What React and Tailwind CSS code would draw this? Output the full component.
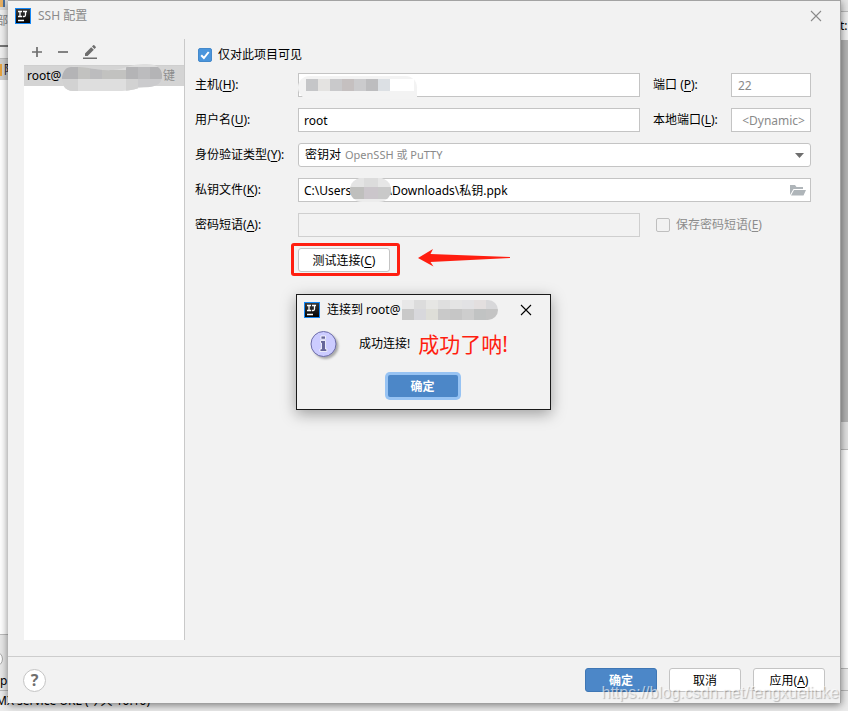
import { useState } from "react";

const Logo = () => (
  <svg viewBox="0 0 16 16" className="w-4 h-4 shrink-0" aria-hidden="true">
    <defs>
      <linearGradient id="logoFill" x1="0" y1="0" x2="0" y2="1">
        <stop offset="0" stopColor="#3c3c3c" />
        <stop offset="1" stopColor="#000" />
      </linearGradient>
    </defs>
    <rect x="0.5" y="0.5" width="15" height="15" fill="url(#logoFill)" stroke="#1487f5" />
    <path
      d="M3 3.500h4M3 8.500h4M5 3.500v5M8 3.500h4M10.500 3.500v3.500c0 1-.5 1.500-1.300 1.500H7.800M3 12.500h6"
      fill="none"
      stroke="#fff"
      strokeWidth="1.3"
    />
  </svg>
);

const CloseIcon = () => (
  <svg viewBox="0 0 12 12" className="w-3 h-3" aria-hidden="true">
    <path d="M1 1l10 10M11 1L1 11" fill="none" stroke="currentColor" strokeWidth="1.1" />
  </svg>
);

// Label text with an underlined mnemonic letter, e.g. 主机(H):
const Mnemonic = ({ text, letter, end = "" }) => (
  <>
    {text}(<span className="underline underline-offset-2">{letter}</span>){end}
  </>
);

// Blurred-out block over private text
const Mosaic = ({ cells, size = "w-3 h-3" }) => (
  <span className="flex">
    {cells.map((color, i) => (
      <span key={i} className={`${size} shrink-0`} style={{ backgroundColor: color }} />
    ))}
  </span>
);

const inputClass =
  "block w-full h-6 px-[5px] border border-[#c4c4c4] bg-white text-black focus:outline-none";
const buttonClass =
  "h-6 pt-[2px] border border-[#c4c4c4] rounded-[3px] bg-white text-black leading-5 whitespace-nowrap";

// Main window that stays visible around the dialog
const Backdrop = () => (
  <div className="absolute inset-0 flex flex-col overflow-hidden bg-[#ececec]" aria-hidden="true">
    <div className="flex justify-between flex-1">
      <div className="w-2 flex flex-col overflow-hidden bg-white">
        <div className="h-[10px] bg-[#ddd] flex">
          <span className="w-[3px] h-[7px] bg-[#e8b062]" />
          <span className="w-[2px] h-[7px] bg-[#4a6f9c]" />
        </div>
        <div className="h-[35px] pt-[3px] bg-[#f0f0f0] text-[#888] overflow-hidden">
          <span className="block -ml-1">部</span>
        </div>
        <div className="h-[13px] border-t-2 border-[#777] bg-[#f0f0f0]" />
        <div className="h-[22px] flex items-center bg-[#d0d0d0] border-t border-[#bbb]">
          <span className="w-[2px] h-3 shrink-0 bg-[#e8a33d]" />
          <span className="ml-[2px] shrink-0">阿</span>
        </div>
        <div className="flex-1" />
        <div className="h-[56px] border-t border-[#bbb] bg-[#e8e8e8] flex flex-col">
          <span className="w-4 h-4 mt-4 -ml-[13px] shrink-0 rounded-full border border-[#aaa] bg-white" />
          <span className="mt-[6px] leading-4">p</span>
        </div>
      </div>
      <div className="w-2 flex flex-col bg-white">
        <div className="h-3 border-b border-[#bbb] bg-[#e6e6e6]" />
        <div className="h-7 pt-[6px] bg-[#f0f0f0] whitespace-nowrap">t:</div>
        <div className="h-[382px] bg-[#b4b4b4]" />
        <div className="h-[28px] border-b border-[#bbb] bg-[#e2e2e2]" />
        <div className="flex-1" />
        <div className="h-[22px] border-t border-[#bbb] bg-[#ececec]" />
      </div>
    </div>
    <div className="h-[21px] border-t border-[#bbb] pt-[1px] leading-[18px] whitespace-nowrap">
      <span className="-ml-1">MX service URL (今天 10:10)</span>
    </div>
  </div>
);

const Sidebar = () => (
  <aside className="w-[161px] shrink-0 flex flex-col border-r border-[#c9c9c9]">
    <div className="h-[27px] pl-[7px] pb-[1px] flex items-center gap-[14px] border-b border-[#cfcfcf] text-[#6e6e6e]">
      <button type="button" aria-label="添加">
        <svg viewBox="0 0 12 12" className="w-3 h-3">
          <path d="M6 1v10M1 6h10" stroke="currentColor" strokeWidth="1.7" />
        </svg>
      </button>
      <button type="button" aria-label="删除">
        <svg viewBox="0 0 12 12" className="w-3 h-3">
          <path d="M1 6h10" stroke="currentColor" strokeWidth="1.7" />
        </svg>
      </button>
      <button type="button" aria-label="编辑">
        <svg viewBox="0 0 14 14" className="w-[14px] h-[14px]" fill="currentColor">
          <path d="M2 11V8.4L8.2 2.2l2.6 2.6L4.6 11zM9 1.5L10.2.3a.8.8 0 0 1 1.1 0l1.4 1.4c.3.3.3.8 0 1.1L11.5 4zM0 12.5h14V14H0z" />
        </svg>
      </button>
    </div>
    <ul className="flex-1 bg-white">
      <li className="relative h-5 pl-[3px] pr-[9px] flex items-center justify-between bg-[#d4d4d4]">
        <span>root@</span>
        <span className="text-[#8c8c8c]">键</span>
        <svg viewBox="0 0 102 28" className="absolute left-[37px] -top-[2px] w-[102px] h-[28px]" aria-hidden="true">
          <defs>
            <clipPath id="smear">
              <path d="M10 3C25 2 35 7 52 6C65 5 68 0 85 0C98 0 102 6 101 14C100 22 92 23 78 24C68 28 55 27 40 27H12C4 27 0 20 1 13C2 7 5 3 10 3z" />
            </clipPath>
          </defs>
          <g clipPath="url(#smear)">
            <rect width="102" height="28" fill="#dedede" />
            <path d="M0 3h17v12H0zM65 3h12v12H65zM89 3h12v12H89z" fill="#b4b4b6" />
            <path d="M17 3h12v12H17zM41 6h24v9H41z" fill="#c2c2c0" />
            <path d="M29 4h12v11H29zM77 3h12v12H77z" fill="#bcbcbe" />
            <path d="M0 15h17v12H0zM65 15h12v12H65z" fill="#d2d2d2" />
            <path d="M77 15h24v8H77z" fill="#cbcbcd" />
          </g>
        </svg>
      </li>
    </ul>
  </aside>
);

const ResultDialog = () => (
  <div
    role="dialog"
    aria-label="连接结果"
    className="absolute left-[288px] top-[293px] w-[255px] h-[116px] border border-[#1a1a1a] bg-[#f2f2f2] shadow-[0_4px_14px_rgba(0,0,0,0.35)]"
  >
    <div className="h-[29px] pl-[7px] pr-[18px] flex items-center">
      <Logo />
      <span className="ml-[7px]">连接到 root@</span>
      <span className="ml-[2px] rounded-tl-lg rounded-r-full overflow-hidden">
        <Mosaic size="w-[12px] h-[9px]" cells={["#e8e8e8", "#dcdcdc", "#e6e6e4", "#dfdfdf", "#e4e4e4", "#e2e2e4", "#e3dfdf", "#d8d8da"]} />
        <Mosaic size="w-[12px] h-[11px]" cells={["#c9c9c9", "#d8d8dc", "#deded8", "#c9c9c9", "#c6c6c6", "#cdcdcd", "#c1c3c3", "#c4c4c4"]} />
      </span>
      <button type="button" aria-label="关闭" className="ml-auto">
        <CloseIcon />
      </button>
    </div>
    <div className="h-[40px] pl-[12px] flex items-center">
      <svg viewBox="0 0 30 30" className="w-[30px] h-[30px] shrink-0 drop-shadow-[2px_2px_1px_rgba(0,0,0,0.3)]" aria-hidden="true">
        <circle cx="14.500" cy="15" r="12.500" fill="#ccccff" stroke="#6b6ba8" />
        <path
          d="M12 7h4.500v3.200H12zM11.500 11.500h5v8.500h1.300v2.500h-6.800V20h1.500v-6h-1z"
          fill="#666699"
          stroke="#fff"
          strokeWidth="0.8"
        />
      </svg>
      <span className="ml-[20px]">成功连接!</span>
      <span className="ml-[8px] text-[21px] text-[#ff1e10]">成功了呐!</span>
    </div>
    <div className="pt-[11px] pr-[2px] flex justify-center">
      <button
        type="button"
        className="w-[70px] h-[22px] pt-[2px] leading-5 rounded-[2px] bg-[#4c87c8] text-white font-bold ring-3 ring-[#97c3f3]"
      >
        确定
      </button>
    </div>
  </div>
);

const App = () => {
  const [projectOnly, setProjectOnly] = useState(true);
  const [user, setUser] = useState("root");

  return (
    <div className="relative min-h-screen flex flex-col text-xs text-black font-['Noto_Sans','Noto_Sans_CJK_SC',sans-serif]">
      <Backdrop />
      <main className="relative flex-1 flex flex-col ml-2 mr-[7px] mb-2 border-t border-r border-[#a3a3a3] bg-[#f2f2f2] shadow-[0_2px_8px_rgba(0,0,0,0.5)]">
        <header className="h-[29px] pl-[7px] pr-[18px] flex items-center text-[#8a8a8a]">
          <Logo />
          <h1 className="ml-[7px]">SSH 配置</h1>
          <button type="button" aria-label="关闭" className="ml-auto">
            <CloseIcon />
          </button>
        </header>

        <div className="flex-1 flex pl-4 pr-[29px] pt-[9px] pb-4">
          <Sidebar />
          <form className="flex-1 pl-[10px] pt-[8px]" onSubmit={(e) => e.preventDefault()}>
            <label className="h-4 mb-[10px] pl-[3px] flex items-center gap-[6px] w-fit">
              <span className="relative w-[14px] h-[14px]">
                <input
                  type="checkbox"
                  checked={projectOnly}
                  onChange={(e) => setProjectOnly(e.target.checked)}
                  className="peer block appearance-none w-[14px] h-[14px] rounded-[2px] border border-[#b0b0b0] bg-white checked:bg-[#4a95dc] checked:border-[#4589cb]"
                />
                <svg viewBox="0 0 14 14" className="absolute inset-0 pointer-events-none opacity-0 peer-checked:opacity-100">
                  <path d="M3.2 7.2l2.7 2.8 4.8-6" fill="none" stroke="#fff" strokeWidth="2" />
                </svg>
              </span>
              仅对此项目可见
            </label>

            <div className="grid grid-cols-[103px_1fr_91px_80px] gap-y-[11px] items-center">
              <label htmlFor="host">
                <Mnemonic text="主机" letter="H" end=":" />
              </label>
              <div className="relative">
                <input id="host" className={inputClass} />
                <span className="absolute left-0 top-[3px] h-[23px] w-[119px] rounded-l-full rounded-tr-full bg-[#f3f3f3] pl-[8px] pt-[3px]">
                  <Mosaic cells={["#c5c6c8", "#e4e3e1", "#c9c9cb", "#c5c0c0", "#cbcbcd", "#bdbdbf", "#dce0e4", "#fff", "#fff"]} />
                </span>
              </div>
              <label htmlFor="port" className="pl-[13px]">
                <Mnemonic text="端口 " letter="P" end=":" />
              </label>
              <input id="port" placeholder="22" className={`${inputClass} pl-[6px] placeholder:text-[#8a8a8a]`} />

              <label htmlFor="user">
                <Mnemonic text="用户名" letter="U" end=":" />
              </label>
              <input id="user" value={user} onChange={(e) => setUser(e.target.value)} className={inputClass} />
              <label htmlFor="localPort" className="pl-[13px]">
                <Mnemonic text="本地端口" letter="L" end=":" />
              </label>
              <input
                id="localPort"
                placeholder="<Dynamic>"
                className={`${inputClass} text-right placeholder:text-[#8a8a8a]`}
              />

              <label htmlFor="authType">
                <Mnemonic text="身份验证类型" letter="Y" end=":" />
              </label>
              <div className="relative col-span-3">
                <select id="authType" className={`${inputClass} appearance-none rounded-[3px] text-transparent`}>
                  <option>密钥对 OpenSSH 或 PuTTY</option>
                </select>
                <span className="absolute inset-y-0 left-[7px] flex items-center gap-1 pointer-events-none">
                  密钥对 <span className="text-[11px] text-[#8a8a8a]">OpenSSH 或 PuTTY</span>
                </span>
                <svg viewBox="0 0 9 5" className="absolute right-[7px] top-[10px] w-[9px] h-[5px] pointer-events-none">
                  <path d="M0 0h9L4.500 5z" fill="#6e6e6e" />
                </svg>
              </div>

              <label htmlFor="keyFile">
                <Mnemonic text="私钥文件" letter="K" end=":" />
              </label>
              <div className="relative col-span-3">
                <input id="keyFile" defaultValue="C:\Users\xxxxx\Downloads\私钥.ppk" className={inputClass} />
                <span className="absolute left-[52px] top-0 w-[41px] h-6 rounded-full overflow-hidden bg-[#ececec]">
                  <Mosaic size="w-[14px] h-[9px]" cells={["#e4e4e4", "#dcdcdc", "#e6e6e6"]} />
                  <Mosaic size="w-[14px] h-[12px]" cells={["#bfbfbd", "#cbc6cb", "#c9c9c9"]} />
                </span>
                <button type="button" aria-label="浏览" className="absolute right-[5px] top-[6px]">
                  <svg viewBox="0 0 16 12" className="w-4 h-3" fill="#afb5b9">
                    <path d="M0 11V1h5l1.500 2H13v2H3.500zM4 6h12l-2.500 5.500H1z" />
                  </svg>
                </button>
              </div>

              <label htmlFor="passphrase">
                <Mnemonic text="密码短语" letter="A" end=":" />
              </label>
              <input
                id="passphrase"
                type="password"
                disabled
                className="block w-full h-6 px-[5px] border border-[#cfcfcf] bg-[#f2f2f2]"
              />
              <label className="col-span-2 pl-4 flex items-center gap-[6px] text-[#8c8c8c]">
                <input
                  type="checkbox"
                  disabled
                  className="appearance-none w-[14px] h-[14px] rounded-[2px] border border-[#bfbfbf] bg-[#f2f2f2]"
                />
                <span>
                  <Mnemonic text="保存密码短语" letter="E" />
                </span>
              </label>

              <div className="col-start-2 relative w-fit">
                <button type="button" className={`${buttonClass} block w-[92px]`}>
                  <Mnemonic text="测试连接" letter="C" />
                </button>
                <span className="absolute -left-[7px] -right-[10px] -top-[5px] -bottom-[4px] border-3 border-[#ff1e10] rounded-[3px] pointer-events-none" />
                <svg viewBox="0 0 92 18" className="absolute left-[120px] top-[1px] w-[92px] h-[18px]" aria-hidden="true">
                  <path d="M0 9L15 0l-2.500 5L92 8v1L12.500 13l3 4.500z" fill="#ff1e10" />
                </svg>
              </div>
            </div>
          </form>
        </div>

        <footer className="h-[47px] pl-[15px] pr-[15px] flex items-center gap-3 border-t border-[#cdcdcd]">
          <button
            type="button"
            aria-label="帮助"
            className="w-[23px] h-[23px] mr-auto rounded-full border border-[#c4c4c4] bg-white text-base leading-none font-bold text-[#6e6e6e]"
          >
            ?
          </button>
          <button
            type="button"
            className="w-[72px] h-6 pt-[2px] leading-5 rounded-[3px] border border-[#3f77b5] bg-[#4c87c8] text-white font-bold"
          >
            确定
          </button>
          <button type="button" className={`${buttonClass} w-[72px]`}>
            取消
          </button>
          <button type="button" className={`${buttonClass} w-[72px]`}>
            <Mnemonic text="应用" letter="A" />
          </button>
        </footer>

        <ResultDialog />
        <span className="absolute right-[1px] bottom-0 font-['Liberation_Sans',sans-serif] text-base leading-5 text-white/60 [text-shadow:1px_1px_1px_rgba(0,0,0,0.25)] pointer-events-none">
          https://blog.csdn.net/fengxueliuke
        </span>
      </main>
    </div>
  );
};

export default App;
